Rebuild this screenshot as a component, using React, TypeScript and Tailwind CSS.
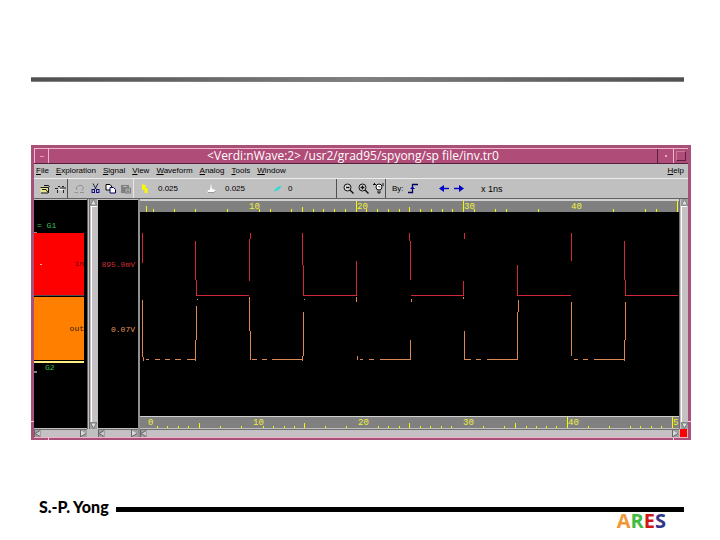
import type { ReactNode } from "react";

const PLOT_WIDTH = 539;

type Tick = [number, number];

const topTicks: Tick[] = [
  [6, 6], [13, 3], [34, 3], [55, 3], [87, 3], [119, 3], [130, 3], [151, 3], [162, 5], [173, 3],
  [183, 3], [194, 3], [205, 3], [216, 11], [226, 3], [237, 3], [248, 3], [259, 3], [269, 5],
  [280, 3], [291, 3], [302, 3], [312, 3], [323, 11], [334, 3], [355, 3], [366, 3], [398, 3],
  [473, 3], [505, 3], [516, 3], [537, 11],
];

const bottomTicks: Tick[] = [
  [17, 2], [27, 2], [38, 2], [48, 2], [59, 5], [80, 2], [101, 2], [123, 2], [133, 2], [144, 2],
  [154, 2], [164, 5], [185, 2], [206, 2], [238, 2], [248, 2], [259, 2], [269, 5], [280, 2],
  [290, 2], [301, 2], [311, 2], [343, 2], [364, 2], [375, 5], [386, 2], [396, 2], [406, 2],
  [416, 2], [427, 11], [448, 2], [469, 2], [490, 2], [500, 2], [511, 2], [521, 2], [532, 11],
];

const topLabels: [number, string][] = [[109, "10"], [217, "20"], [324, "30"], [431, "40"]];
const bottomLabels: [number, string][] = [
  [8, "0"], [113, "10"], [218, "20"], [323, "30"], [428, "40"], [533, "5"],
];

const percent = (x: number) => `${(x / PLOT_WIDTH) * 100}%`;

function Ruler({ ticks, labels }: { ticks: Tick[]; labels: [number, string][] }) {
  return (
    <svg className="block h-[11px] w-full bg-[#808080]" shapeRendering="crispEdges">
      {ticks.map(([x, h]) => (
        <rect key={x} x={percent(x)} y={11 - h} width="1" height={h} fill="#f8f800" />
      ))}
      {labels.map(([x, label]) => (
        <text key={x} x={percent(x)} y="8" fill="#f0f03c" className="font-['Liberation_Mono',monospace] text-[9px]">
          {label}
        </text>
      ))}
    </svg>
  );
}

function Waves() {
  return (
    <svg
      className="block min-h-0 w-full flex-1 bg-black"
      viewBox="0 0 539 204"
      preserveAspectRatio="none"
      fill="none"
      shapeRendering="crispEdges"
    >
      <path
        stroke="#d02838"
        d="M2.5 21V51 M55.5 29V68 M56.5 68V83.5H109 M110.5 21V27 M109.5 27V69 M162.5 21V53 M163.5 53V83.5H216.5V49 M269.5 21V29 M270.5 29V68 M271 83.5H323.5V69 M324.5 21V27 M377.5 53V83.5H431 M431.5 21V49 M484.5 29V68 M485.5 68V83.5H538"
      />
      <path
        stroke="#dc8854"
        d="M2.5 88V145 M3.5 145V149 M6 147.5H9 M15 147.5H20 M25 147.5H30 M35 147.5H41 M47 147.5H55.5 M55.5 149V128 M56.5 128V94 M57.5 87V88 M109.5 85V119 M110.5 119V148 M112 147.5H117 M122 147.5H127 M132 147.5H162.5 M162.5 149V144 M163.5 144V100 M164.5 87V88 M216.5 85V90 M217.5 144V148 M220 147.5H223 M229 147.5H234 M240 147.5H270.5V128 M271.5 87V90 M323.5 85V87 M324.5 119V147.5H331 M336 147.5H341 M347 147.5H377.5V100 M378.5 100V88 M431.5 90V144 M434 147.5H438 M443 147.5H448 M454 147.5H484.5 M484.5 149V128 M485.5 128V90"
      />
    </svg>
  );
}

function ScrollButton({ label, children }: { label: string; children: ReactNode }) {
  return (
    <button type="button" aria-label={label} className="block h-[7px] w-[7px] shrink-0 bg-[#a0a0a0]">
      <svg viewBox="0 0 7 7" className="block h-[7px] w-[7px]">
        {children}
      </svg>
    </button>
  );
}

function HorizontalScroll({ name }: { name: string }) {
  return (
    <div className="flex h-2 shrink-0 items-center justify-between border-t border-t-[#707070] bg-[#c4c0c4]">
      <ScrollButton label={`Scroll ${name} left`}>
        <path d="M6 0.5L1 3.5L6 6.5Z" fill="#c8c8c8" />
        <path d="M0.5 0V7M6 0.5L1 3.5L6 6.5" stroke="#686868" fill="none" />
      </ScrollButton>
      <ScrollButton label={`Scroll ${name} right`}>
        <path d="M1 0.5L6 3.5L1 6.5Z" fill="#d8d8d8" />
        <path d="M0.5 0V7M1 6.5L6 3.5" stroke="#606868" fill="none" />
      </ScrollButton>
    </div>
  );
}

function VerticalScroll({ name }: { name: string }) {
  return (
    <div className="flex min-h-0 flex-1 flex-col items-center justify-between border-l border-l-[#707070] bg-[#c4c0c4]">
      <ScrollButton label={`Scroll ${name} up`}>
        <path d="M3.5 0.5L6.5 6H0.5Z" fill="#e0e0e0" stroke="#686868" strokeWidth="0.7" />
      </ScrollButton>
      <div className="w-[6px] flex-1 border-t border-l border-white" />
      <ScrollButton label={`Scroll ${name} down`}>
        <path d="M0.5 1H6.5L3.5 6.5Z" fill="#e0e0e0" stroke="#505858" strokeWidth="0.7" />
      </ScrollButton>
    </div>
  );
}

function Tool({ label, className = "", children }: { label: string; className?: string; children: ReactNode }) {
  return (
    <button type="button" aria-label={label} className={`block shrink-0 ${className}`}>
      <svg viewBox="0 0 11 11" className="block h-[11px] w-[11px]" fill="none">
        {children}
      </svg>
    </button>
  );
}

const Divider = ({ className = "" }: { className?: string }) => (
  <div className={`w-px shrink-0 self-stretch ${className}`} />
);

function Toolbar() {
  return (
    <div className="flex h-5 items-center border-b border-b-[#606060] bg-[#c0c0c0] pl-1.5 text-[8px] leading-[10px] text-black">
      <Tool label="Open">
        <path d="M0.5 4V9.5H8V4.5H4L3 3.5H1Z" fill="#e8e890" />
        <path d="M0.5 4.5H8.5V10M2 6.5H6L8 9.5M1 10H8M4 2.5H8.5L9.5 4" stroke="#181818" />
      </Tool>
      <Tool label="Reload" className="ml-1">
        <path d="M0 5.5H3M5 5H11M2.5 7V10M8.5 7V10M3 3.5H5M7 3.5H9" stroke="#202020" />
        <path d="M4 6.5H8" stroke="#fff" />
      </Tool>
      <Divider className="ml-px bg-[#505050]" />
      <Tool label="Undo" className="ml-1.5">
        <path d="M2 5L5 2.5H8L9.5 4.5L8 7.5M0.5 9.5H4M6 9.5H10M2 5L3 7" stroke="#909090" />
      </Tool>
      <Tool label="Cut" className="ml-[5px]">
        <path d="M3 0.5L6 6M8 0.5L5 6" stroke="#202040" />
        <rect x="2" y="6.5" width="2.5" height="3" stroke="#101080" />
        <rect x="6.5" y="6.5" width="2.5" height="3" stroke="#101080" />
      </Tool>
      <Tool label="Copy" className="ml-1">
        <path d="M1 1.5H5L6.5 3V7H1Z" fill="#fff" stroke="#000" />
        <path d="M5 4.5H8.5L10.5 6.5V10H5Z" fill="#fff" stroke="#000060" />
      </Tool>
      <Tool label="Paste" className="ml-1">
        <path d="M1 2H9V10H1Z" fill="#808080" />
        <path d="M3.5 1.5H6.5M3 3.5H7" stroke="#b8b8b8" />
        <path d="M5 5H10.5V10H5Z" fill="#b0b0b0" stroke="#787878" />
        <path d="M6.5 7H9M6.5 8.5H9" stroke="#808080" />
      </Tool>
      <Divider className="ml-0.5 bg-[#e8e8e8]" />
      <Tool label="Cursor" className="ml-1.5">
        <path d="M2 1L6 2.5L5.5 5H7.5V10H4.5V6.5L2 7Z" fill="#f8f800" />
      </Tool>
      <output aria-label="Cursor time" className="ml-[7px] w-12">0.025</output>
      <Tool label="Marker">
        <path d="M5 0.5L6 6L10 7L7 10H1.5L2 7H4Z" fill="#fff" />
        <path d="M2 9.5H8L10 7.5" stroke="#999" />
      </Tool>
      <output aria-label="Marker time" className="ml-2 w-12">0.025</output>
      <Tool label="Delta">
        <path d="M0.5 8L4 4L8.5 2.5L6.5 6.5L2 8.5Z" fill="#40d8d0" />
      </Tool>
      <output aria-label="Delta time" className="ml-1 w-12">0</output>
      <Divider className="bg-[#505050]" />
      <Tool label="Zoom out" className="ml-1.5">
        <circle cx="4.5" cy="4.5" r="3.5" fill="#e0e0e0" stroke="#101010" />
        <path d="M3 4.5H6.5M7 7L10.5 10.5" stroke="#101010" strokeWidth="1.4" />
      </Tool>
      <Tool label="Zoom in" className="ml-1">
        <circle cx="4.5" cy="4.5" r="3.5" fill="#e0e0e0" stroke="#101010" />
        <path d="M2.5 4.5H6.5M4.5 2.5V6.5M7 7L10.5 10.5" stroke="#101010" strokeWidth="1.4" />
      </Tool>
      <Tool label="Zoom to fit" className="ml-1">
        <circle cx="6" cy="4" r="3" fill="#fff" stroke="#101010" />
        <path d="M1.5 0V2M0 1.5H3M10 0V3M5 7.5V10H7V7.5" stroke="#101010" />
        <path d="M5 3.5H7V5" stroke="#888" />
      </Tool>
      <Divider className="ml-px bg-[#505050]" />
      <span className="ml-1.5 w-4">By:</span>
      <Tool label="Any edge">
        <path d="M0 9.5H4.5V1.5H10" stroke="#000060" strokeWidth="1.3" />
        <path d="M2 6L4.5 3.5L7 6Z" fill="#0000b0" />
      </Tool>
      <Tool label="Previous edge" className="ml-5">
        <path d="M0 5.5L5 2V9Z" fill="#0000c8" />
        <path d="M4 5.5H10" stroke="#0000c8" strokeWidth="1.4" />
      </Tool>
      <Tool label="Next edge" className="ml-1">
        <path d="M10 5.5L5 2V9Z" fill="#0000c8" />
        <path d="M0 5.5H6" stroke="#0000c8" strokeWidth="1.4" />
      </Tool>
      <span className="ml-4 text-[9px]">x 1ns</span>
    </div>
  );
}

const menus = ["File", "Exploration", "Signal", "View", "Waveform", "Analog", "Tools", "Window"];

function MenuItem({ name }: { name: string }) {
  return (
    <button type="button" className="block">
      <span className="underline">{name[0]}</span>
      {name.slice(1)}
    </button>
  );
}

function ResizeMarks() {
  return (
    <>
      <span className="absolute bottom-4 -left-[3px] h-px w-[3px] bg-[#f0d0dc]" />
      <span className="absolute -right-[3px] bottom-4 h-px w-[3px] bg-[#f0d0dc]" />
      <span className="absolute -bottom-0.5 left-3.5 h-0.5 w-px bg-[#f0d0dc]" />
      <span className="absolute right-3.5 -bottom-0.5 h-0.5 w-px bg-[#f0d0dc]" />
    </>
  );
}

function WaveWindow() {
  return (
    <section className="relative mt-[63px] mr-[29px] ml-[31px] border-[3px] border-b-2 border-[#a85078] font-['Liberation_Sans',Arial,sans-serif]">
      <div className="border-y border-y-[#f0b4cc]">
        <header className="flex h-[15px] items-stretch border-b border-b-[#582040] bg-[#b04c78]">
          <button
            type="button"
            aria-label="Window menu"
            className="flex w-[15px] items-center justify-center border-r border-l border-r-[#f0b4cc] border-l-[#f0b4cc]"
          >
            <span className="h-px w-1 bg-[#e0a0bc]" />
          </button>
          <h1 className="flex-1 text-center font-['Open_Sans','Noto_Sans',sans-serif] text-[12px] leading-[14px] whitespace-nowrap text-white">
            &lt;Verdi:nWave:2&gt; /usr2/grad95/spyong/sp file/inv.tr0
          </h1>
          <button
            type="button"
            aria-label="Minimize"
            className="flex w-4 items-center justify-center border-l border-l-[#582040]"
          >
            <span className="h-0.5 w-0.5 bg-[#e8a8c4]" />
          </button>
          <button
            type="button"
            aria-label="Maximize"
            className="flex w-[15px] items-center justify-center border-l border-l-[#f0b4cc]"
          >
            <span className="h-[10px] w-[10px] border border-t-[#c87898] border-r-[#582040] border-b-[#582040] border-l-[#c87898]" />
          </button>
        </header>

        <nav className="flex h-[15px] items-center gap-[7px] border-b border-b-[#ececec] bg-[#c0c0c0] pr-1 pl-0.5 text-[8px] leading-[10px] text-black">
          {menus.map((name) => (
            <MenuItem key={name} name={name} />
          ))}
          <div className="ml-auto">
            <MenuItem name="Help" />
          </div>
        </nav>

        <Toolbar />

        <div className="flex h-[238px] bg-[#c0c0c0]">
          <div className="flex w-[53px] shrink-0 flex-col">
            <div className="mt-px flex min-h-0 flex-1 flex-col bg-black font-['Liberation_Mono',monospace] text-[8px] leading-[10px]">
              <div className="h-8 pt-[21px] pl-[3px] whitespace-pre text-[#38c050]">= G1</div>
              <div className="h-px w-[3px] bg-[#909090]" />
              <div className="mr-[3px] flex h-[62px] items-center justify-between bg-[#ff0000] pl-1.5 text-[#600000]">
                <span className="h-px w-0.5 bg-[#ffc0a0]" />
                <span>in</span>
              </div>
              <div className="h-px w-[50px] bg-[#505050]" />
              <div className="mt-px mr-[3px] h-[63px] bg-[#ff8000] pt-[27px] text-right text-[#301800]">out</div>
              <div className="mt-px mr-[3px] h-0.5 bg-[#fff080]" />
              <div className="flex items-start text-[#38c050]">
                <span className="mt-2 h-0.5 w-[3px] bg-[#808080]" />
                <span className="ml-2">G2</span>
              </div>
            </div>
            <div className="h-px shrink-0" />
            <HorizontalScroll name="names" />
          </div>

          <div className="flex w-[11px] shrink-0 flex-col pb-2">
            <div className="flex min-h-0 flex-1 border-l border-l-[#606060] pr-0.5 pl-px">
              <VerticalScroll name="signals" />
            </div>
          </div>

          <div className="flex w-10 shrink-0 flex-col">
            <div className="mt-px flex min-h-0 flex-1 flex-col bg-black pr-[3px] text-right font-['Liberation_Mono',monospace] text-[8px] leading-[10px]">
              <div className="mt-[60px] flex justify-end text-[#c83038]">895.0mV</div>
              <div className="mt-[55px] text-[#e09860]">0.07V</div>
            </div>
            <div className="h-px shrink-0" />
            <HorizontalScroll name="values" />
          </div>

          <div className="flex min-w-0 flex-1 flex-col border-l-2 border-l-[#909090]">
            <div className="h-0.5 shrink-0 bg-[#d0d0d0]" />
            <Ruler ticks={topTicks} labels={topLabels} />
            <Waves />
            <div className="h-px shrink-0 bg-[#d0d0d0]" />
            <Ruler ticks={bottomTicks} labels={bottomLabels} />
            <div className="h-px shrink-0" />
            <HorizontalScroll name="waveforms" />
          </div>

          <div className="flex w-[9px] shrink-0 flex-col">
            <VerticalScroll name="waveforms" />
            <button type="button" aria-label="Stop" className="ml-px block h-2 w-[7px] shrink-0 bg-[#ff0000]" />
          </div>
        </div>
      </div>
      <ResizeMarks />
    </section>
  );
}

export default function App() {
  return (
    <main className="min-h-screen bg-white pt-[77px]">
      <div className="mr-9 ml-[31px] h-[5px] border-y border-y-[#808080] bg-linear-to-r from-[#505050] via-[#808080] to-[#505050]" />
      <WaveWindow />
      <footer className="mt-[57px] mr-9 ml-[39px]">
        <div className="flex items-center gap-[7px]">
          <span className="font-['Lato',sans-serif] text-[16px] leading-5 font-black text-black">S.-P. Yong</span>
          <div className="mt-[5px] h-[5px] flex-1 bg-black" />
        </div>
        <div className="-mt-1.5 mr-[18px] text-right font-['Open_Sans',sans-serif] text-[20px] leading-5 font-bold">
          <span className="text-[#f09838]">A</span>
          <span className="text-[#40bc40]">R</span>
          <span className="text-[#d01818]">E</span>
          <span className="text-[#343488]">S</span>
        </div>
      </footer>
    </main>
  );
}
